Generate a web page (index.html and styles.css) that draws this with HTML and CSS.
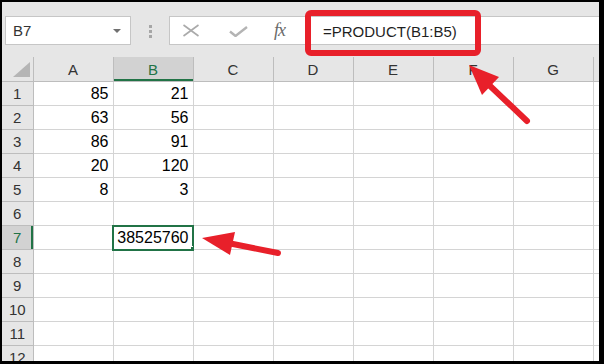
FILE: index.html
```html
<!DOCTYPE html>
<html lang="en">
<head>
    <meta charset="UTF-8">
    <meta name="viewport" content="width=device-width, initial-scale=1.0">
    <title>PRODUCT formula</title>
    <link rel="stylesheet" href="styles.css">
</head>
<body>

<div class="window">
    <div class="formula-bar">
        <div class="name-box">
            <span>B7</span>
            <span class="caret"></span>
        </div>
        <div class="grip"><i></i><i></i><i></i></div>
        <div class="formula-box">
            <svg class="icon-cancel" width="18" height="13" viewBox="0 0 18 13">
                <path d="M1.5 1 L16.5 12 M16.5 1 L1.5 12" stroke="#aaaaaa" stroke-width="1.6" fill="none"/>
            </svg>
            <svg class="icon-enter" width="19" height="11" viewBox="0 0 19 11">
                <path d="M1 5.5 L6.5 10 L18 1" stroke="#b4b4b4" stroke-width="2.4" fill="none"/>
            </svg>
            <span class="fx"><i>f</i><i>x</i></span>
            <span class="formula">=PRODUCT(B1:B5)</span>
        </div>
    </div>

    <table class="sheet">
        <colgroup>
            <col class="col-rh">
            <col class="col-c"><col class="col-c"><col class="col-c"><col class="col-c">
            <col class="col-c"><col class="col-c"><col class="col-c">
            <col class="col-rest">
        </colgroup>
        <thead>
            <tr>
                <th class="corner">
                    <svg width="31" height="24" viewBox="0 0 31 24"><polygon points="11,20 28,20 28,5" fill="#b5b5b5"/></svg>
                </th>
                <th>A</th><th class="sel-col">B</th><th>C</th><th>D</th><th>E</th><th>F</th><th>G</th><th></th>
            </tr>
        </thead>
        <tbody>
            <tr><th>1</th><td>85</td><td>21</td><td></td><td></td><td></td><td></td><td></td><td></td></tr>
            <tr><th>2</th><td>63</td><td>56</td><td></td><td></td><td></td><td></td><td></td><td></td></tr>
            <tr><th>3</th><td>86</td><td>91</td><td></td><td></td><td></td><td></td><td></td><td></td></tr>
            <tr><th>4</th><td>20</td><td>120</td><td></td><td></td><td></td><td></td><td></td><td></td></tr>
            <tr><th>5</th><td>8</td><td>3</td><td></td><td></td><td></td><td></td><td></td><td></td></tr>
            <tr><th>6</th><td></td><td></td><td></td><td></td><td></td><td></td><td></td><td></td></tr>
            <tr><th class="sel-row">7</th><td></td><td class="active">38525760</td><td></td><td></td><td></td><td></td><td></td><td></td></tr>
            <tr><th>8</th><td></td><td></td><td></td><td></td><td></td><td></td><td></td><td></td></tr>
            <tr><th>9</th><td></td><td></td><td></td><td></td><td></td><td></td><td></td><td></td></tr>
            <tr><th>10</th><td></td><td></td><td></td><td></td><td></td><td></td><td></td><td></td></tr>
            <tr><th>11</th><td></td><td></td><td></td><td></td><td></td><td></td><td></td><td></td></tr>
            <tr><th>12</th><td></td><td></td><td></td><td></td><td></td><td></td><td></td><td></td></tr>
        </tbody>
    </table>
</div>

<!-- red callouts drawn over the screenshot -->
<svg class="marks" width="604" height="364" viewBox="0 0 604 364">
    <rect x="308" y="13" width="170" height="40" rx="3" fill="none" stroke="#e8202a" stroke-width="6"/>
    <line x1="527" y1="121" x2="488" y2="84" stroke="#e8202a" stroke-width="6" stroke-linecap="round"/>
    <polygon points="469,65 499,77 482,95" fill="#e8202a"/>
    <line x1="278" y1="253" x2="228" y2="243" stroke="#e8202a" stroke-width="6" stroke-linecap="round"/>
    <polygon points="202,238 235,232 230,255" fill="#e8202a"/>
</svg>

</body>
</html>
```

FILE: styles.css
```css
body {
    margin: 0;
    padding: 0;
    background-color: #000;
    width: 604px;
    height: 364px;
    overflow: hidden;
    position: relative;
    font-family: "Liberation Sans", Arial, sans-serif;
}
.window {
    width: 597px;
    height: 359px;
    margin: 2px 5px 3px 2px;
    background-color: #fff;
    overflow: hidden;
}
.formula-bar {
    height: 55px;
    box-sizing: border-box;
    padding: 14px 0 0 3px;
    background-color: #e6e6e6;
    display: flex;
    align-items: flex-start;
}
.name-box {
    width: 126px;
    height: 29px;
    box-sizing: border-box;
    border: 1px solid #c6c6c6;
    background-color: #fff;
    display: flex;
    align-items: center;
    justify-content: space-between;
    padding: 0 9px 0 7px;
    font-size: 15px;
    color: #333;
}
.caret {
    width: 0;
    height: 0;
    border-left: 4px solid transparent;
    border-right: 4px solid transparent;
    border-top: 4px solid #707070;
}
.grip {
    width: 38px;
    padding-top: 9px;
    display: flex;
    flex-direction: column;
    align-items: center;
    gap: 2px;
}
.grip i {
    width: 3px;
    height: 3px;
    background-color: #a6a6a6;
}
.formula-box {
    flex: 1;
    height: 29px;
    box-sizing: border-box;
    border: 1px solid #c6c6c6;
    border-right: none;
    background-color: #fff;
    display: flex;
    align-items: center;
}
.icon-cancel {
    margin-left: 12px;
}
.icon-enter {
    margin-left: 29px;
    margin-top: 1px;
}
.fx {
    margin-left: 26px;
    font-family: "Liberation Serif", "Times New Roman", serif;
    font-size: 18px;
    color: #6a6a6a;
    letter-spacing: -1px;
}
.formula {
    margin-left: 38px;
    font-size: 15px;
    color: #1f1f1f;
    padding-top: 2px;
}
.sheet {
    border-collapse: collapse;
    table-layout: fixed;
    width: 597px;
    font-size: 16px;
}
.col-rh {
    width: 31px;
}
.col-c {
    width: 80px;
}
.col-rest {
    width: 6px;
}
.sheet th, .sheet td {
    height: 24px;
    box-sizing: border-box;
    padding: 0 4px 0 0;
    border: 1px solid #d4d4d4;
    overflow: hidden;
    white-space: nowrap;
}
.sheet td {
    text-align: right;
    color: #000;
}
.sheet th {
    background-color: #e6e6e6;
    border-color: #bdbdbd;
    font-weight: normal;
    font-size: 15px;
    color: #333;
    text-align: center;
    padding: 0;
}
.sheet thead th {
    border-top: none;
}
.sheet tr > th:first-child {
    border-left: none;
}
.corner svg {
    display: block;
}
.sheet th.sel-col {
    background-color: #d2d2d2;
    color: #217346;
    box-shadow: inset 0 -2px 0 #217346;
}
.sheet th.sel-row {
    background-color: #d2d2d2;
    color: #217346;
    box-shadow: inset -2px 0 0 #217346;
}
.sheet td.active {
    position: relative;
    outline: 2px solid #217346;
    outline-offset: -1px;
}
.sheet td.active::after {
    content: "";
    position: absolute;
    right: -4px;
    bottom: -4px;
    width: 5px;
    height: 5px;
    background-color: #217346;
    border: 1px solid #fff;
}
.marks {
    position: absolute;
    top: 0;
    left: 0;
    pointer-events: none;
}
```
